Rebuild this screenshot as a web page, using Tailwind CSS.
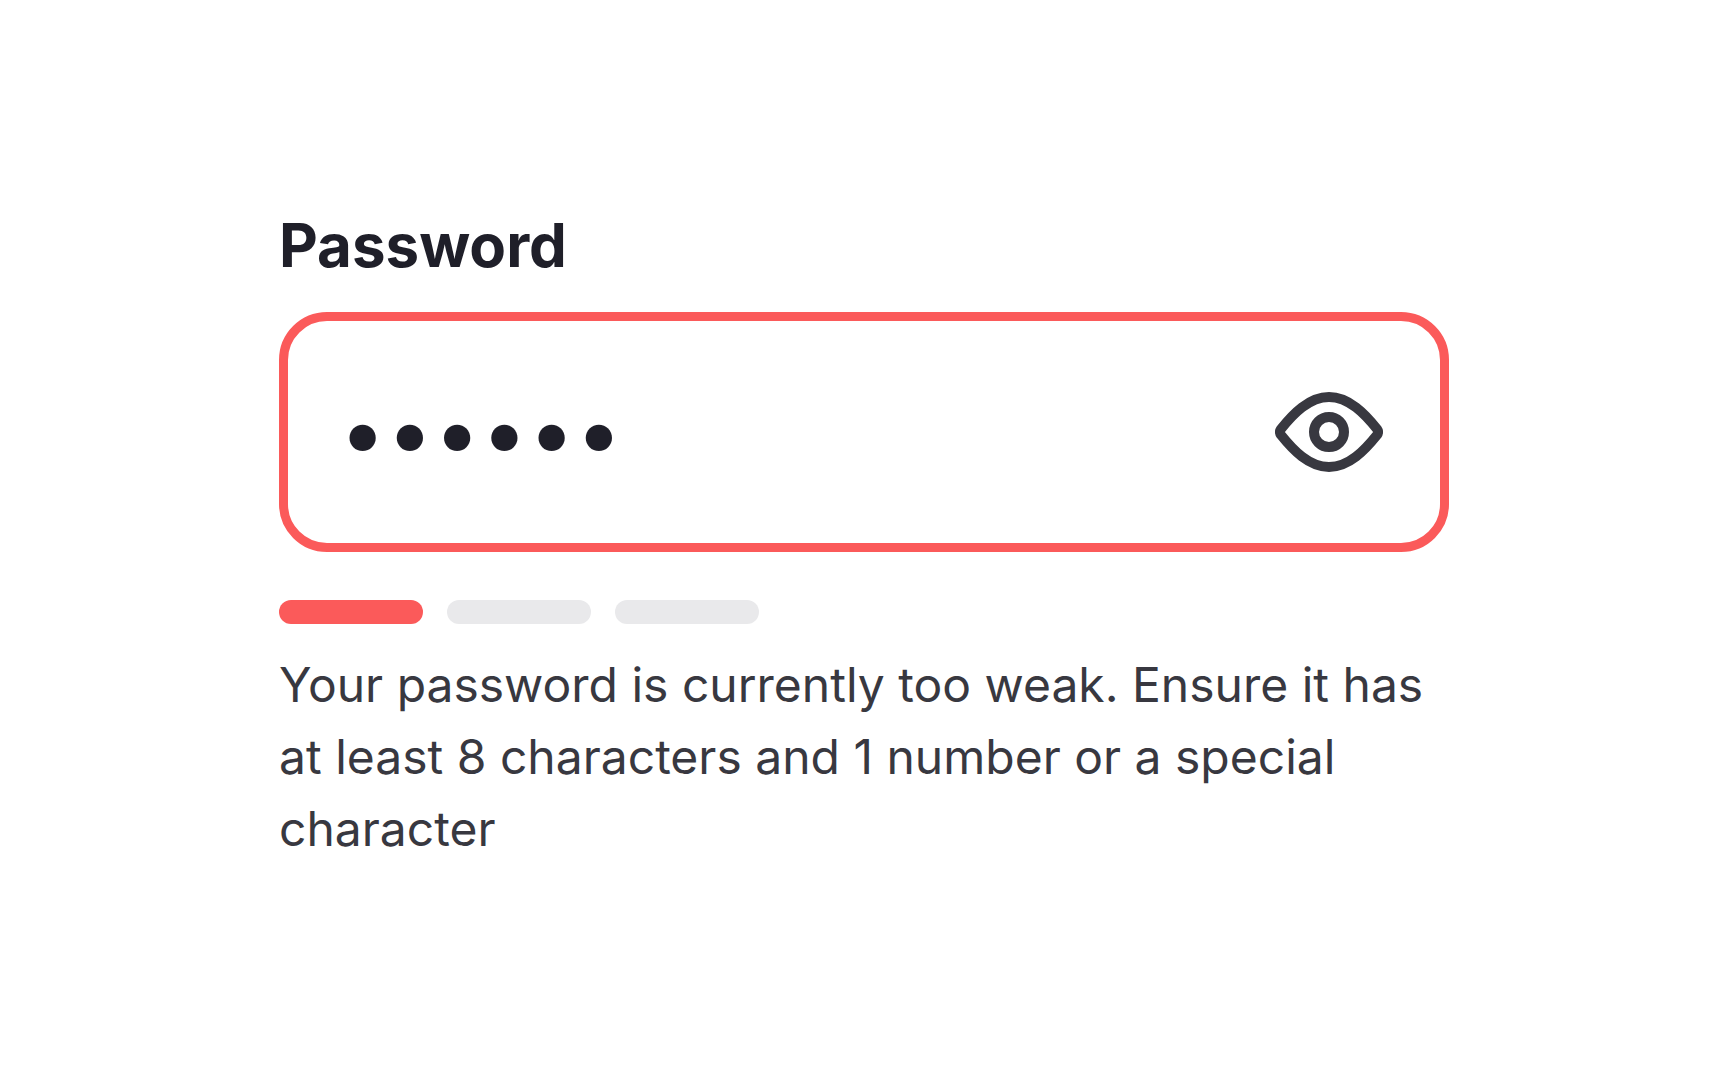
<!DOCTYPE html>
<html lang="en">
<head>
<meta charset="utf-8">
<title>Password</title>
<script src="https://cdn.jsdelivr.net/npm/@tailwindcss/browser@4"></script>
</head>
<body class="min-h-screen bg-white font-['Inter',sans-serif] text-[#1f1f29]">
<main class="mx-auto flex min-h-screen w-full max-w-[1170px] flex-col justify-center">
  <label for="password" class="text-[60px] leading-[60px] font-bold">Password</label>
  <div class="mt-[37px] flex h-60 items-center rounded-[48px] border-9 border-[#fb5a5a] pr-[57px] pl-[51px]">
    <input id="password" type="password" value="secret" aria-describedby="hint" class="min-w-0 flex-1 bg-transparent text-[84px] leading-[96px] outline-none">
    <button type="button" aria-label="Show password" class="shrink-0">
      <svg class="block h-20 w-[108px]" viewBox="0 0 108 80" fill="none" stroke="#383840" stroke-width="10" stroke-linejoin="round"><path d="M6 37C18 22 34 5 54 5S90 22 102 37Q104 40 102 43C90 58 74 75 54 75S18 58 6 43Q4 40 6 37Z"/><circle cx="54" cy="40" r="15"/></svg>
    </button>
  </div>
  <div class="mt-12 flex gap-6" role="img" aria-label="Password strength: weak">
    <span class="h-6 w-36 rounded-full bg-[#fb5a5a]"></span>
    <span class="h-6 w-36 rounded-full bg-[#e9e9eb]"></span>
    <span class="h-6 w-36 rounded-full bg-[#e9e9eb]"></span>
  </div>
  <p id="hint" class="mt-[25px] text-[48px] leading-[72px] text-[#383840]">Your password is currently too weak. Ensure it has at least 8 characters and 1 number or a special character</p>
</main>
</body>
</html>
